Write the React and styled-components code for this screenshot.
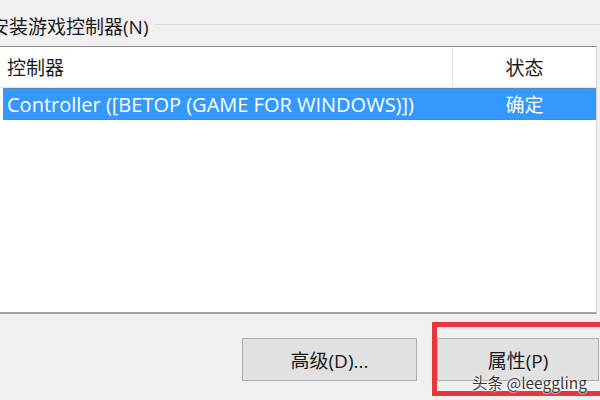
import React from "react";
import styled, { createGlobalStyle } from "styled-components";

const Global = createGlobalStyle`
  html, body { margin: 0; padding: 0; background: #f0f0f0; overflow: hidden; }
  #root { width: 600px; height: 400px; }
`;

const FONT = `"Open Sans", "Noto Sans CJK SC", sans-serif`;

const Dialog = styled.div`
  position: relative;
  width: 600px;
  height: 400px;
  overflow: hidden;
  background: #f0f0f0;
  display: flex;
  flex-direction: column;
  font-family: ${FONT};
  color: #1a1a1a;
`;

const GroupHeader = styled.div`
  display: flex;
  align-items: flex-start;
  height: 46px;
  padding-top: 13px;
  box-sizing: border-box;
`;

const GroupTitle = styled.span`
  font-size: 19px;
  line-height: 28px;
  margin-left: -10px;
  white-space: nowrap;
  padding-right: 6px;
`;

const GroupLine = styled.div`
  flex: 1;
  margin-top: 11px;
  border-top: 1px solid #dcdcdc;
`;

const ListBox = styled.div`
  width: 597px;
  height: 268px;
  box-sizing: border-box;
  background: #fff;
  border-top: 1px solid #8a8a8a;
  border-right: 1px solid #d4d4d4;
  border-bottom: 2px solid #a3a3a3;
  display: flex;
  flex-direction: column;
`;

const HeaderRow = styled.div`
  display: flex;
  height: 41px;
  box-sizing: border-box;
  border-bottom: 1px solid #e5e5e5;
`;

const HeaderCell = styled.div`
  display: flex;
  align-items: center;
  font-size: 19px;
  color: #1a1a1a;
  box-sizing: border-box;
  width: ${(p) => (p.$w ? `${p.$w}px` : "auto")};
  flex: ${(p) => (p.$w ? "none" : "1")};
  justify-content: ${(p) => (p.$center ? "center" : "flex-start")};
  padding-left: ${(p) => (p.$center ? "0" : "7px")};
  border-right: ${(p) => (p.$divider ? "1px solid #e5e5e5" : "none")};
`;

const Row = styled.div`
  display: flex;
  height: 32px;
  margin-left: 3px;
  box-sizing: border-box;
  background: #3399ff;
  border-top: 1px solid #5b88b8;
  border-bottom: 1px solid #5b88b8;
  color: #fff;
`;

const RowCell = styled.div`
  display: flex;
  align-items: center;
  font-size: ${(p) => (p.$center ? 19 : 20)}px;
  white-space: nowrap;
  width: ${(p) => (p.$w ? `${p.$w}px` : "auto")};
  flex: ${(p) => (p.$w ? "none" : "1")};
  justify-content: ${(p) => (p.$center ? "center" : "flex-start")};
  padding-left: ${(p) => (p.$center ? "0" : "4px")};
  box-sizing: border-box;
`;

const ButtonBar = styled.div`
  display: flex;
  gap: 20px;
  padding-top: 24px;
  padding-left: 242px;
`;

const Button = styled.div`
  position: relative;
  width: ${(p) => p.$w}px;
  height: 43px;
  box-sizing: border-box;
  flex: none;
  background: #e1e1e1;
  border: 1px solid #adadad;
  display: flex;
  align-items: center;
  justify-content: center;
  font-size: 19px;
  color: #1a1a1a;
`;

const Highlight = styled.div`
  position: absolute;
  left: -6px;
  top: -17px;
  width: 230px;
  height: 74px;
  box-sizing: border-box;
  border: 5px solid #e8363c;
  pointer-events: none;
`;

const Watermark = styled.div`
  position: absolute;
  left: 472px;
  top: 373px;
  font-family: "Noto Sans CJK SC", "Open Sans", sans-serif;
  font-size: 15.5px;
  line-height: 18px;
  color: #3a3a3a;
  text-shadow: 0 0 2px #fff, 0 0 2px #fff, 0 0 1px #fff;
  white-space: nowrap;
`;

export default function App() {
  return (
    <>
      <Global />
      <Dialog>
        <GroupHeader>
          <GroupTitle>安装游戏控制器(N)</GroupTitle>
          <GroupLine />
        </GroupHeader>
        <ListBox>
          <HeaderRow>
            <HeaderCell $w={453} $divider>控制器</HeaderCell>
            <HeaderCell $center>状态</HeaderCell>
          </HeaderRow>
          <Row>
            <RowCell $w={450}>Controller ([BETOP (GAME FOR WINDOWS)])</RowCell>
            <RowCell $center>确定</RowCell>
          </Row>
        </ListBox>
        <ButtonBar>
          <Button $w={175}>高级(D)...</Button>
          <Button $w={162}>
            属性(P)
            <Highlight />
          </Button>
        </ButtonBar>
        <Watermark>头条 @leeggling</Watermark>
      </Dialog>
    </>
  );
}
